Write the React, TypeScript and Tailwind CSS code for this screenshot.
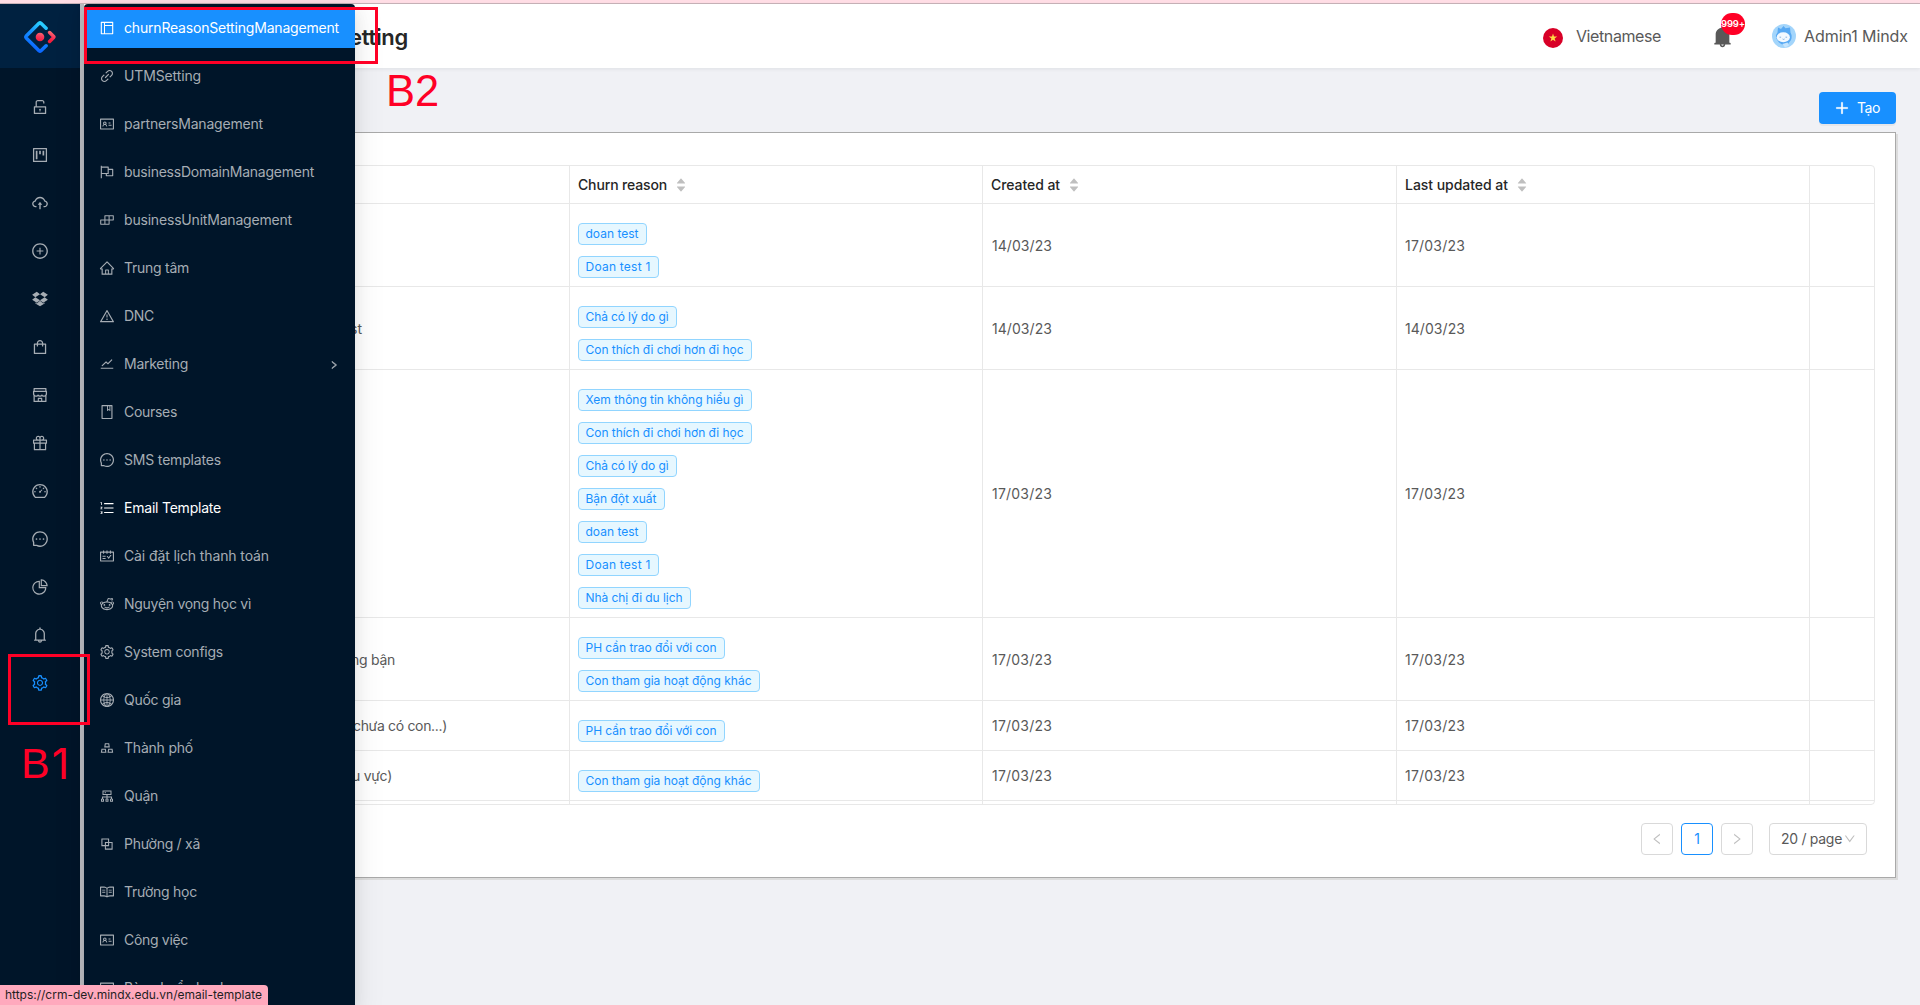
import React from "react";
import {
  AiOutlineUnlock, AiOutlineProject, AiOutlineCloudUpload, AiOutlinePlusCircle, AiOutlineDropbox,
  AiOutlineShopping, AiOutlineShop, AiOutlineGift, AiOutlineDashboard, AiOutlineMessage,
  AiOutlinePieChart, AiOutlineBell, AiOutlineSetting, AiOutlineLayout, AiOutlineLink, AiOutlineIdcard,
  AiOutlineFlag, AiOutlineBuild, AiOutlineHome, AiOutlineWarning, AiOutlineStock, AiOutlineBook,
  AiOutlineOrderedList, AiOutlineSchedule, AiOutlineReddit, AiOutlineGlobal, AiOutlineGold,
  AiOutlineCluster, AiOutlineBlock, AiOutlineRead, AiFillBell, AiOutlinePlus, AiOutlineLeft,
  AiOutlineRight, AiOutlineDown, AiFillCaretUp, AiFillCaretDown,
} from "react-icons/ai";

const railIcons = [
  AiOutlineUnlock, AiOutlineProject, AiOutlineCloudUpload, AiOutlinePlusCircle, AiOutlineDropbox,
  AiOutlineShopping, AiOutlineShop, AiOutlineGift, AiOutlineDashboard, AiOutlineMessage,
  AiOutlinePieChart, AiOutlineBell, AiOutlineSetting,
];

const menu = [
  { icon: AiOutlineLayout, label: "churnReasonSettingManagement", w: 215, state: "active" },
  { icon: AiOutlineLink, label: "UTMSetting", w: 77 },
  { icon: AiOutlineIdcard, label: "partnersManagement", w: 139 },
  { icon: AiOutlineFlag, label: "businessDomainManagement", w: 190 },
  { icon: AiOutlineBuild, label: "businessUnitManagement", w: 168 },
  { icon: AiOutlineHome, label: "Trung tâm", w: 65 },
  { icon: AiOutlineWarning, label: "DNC", w: 30 },
  { icon: AiOutlineStock, label: "Marketing", w: 64, sub: true },
  { icon: AiOutlineBook, label: "Courses", w: 53 },
  { icon: AiOutlineMessage, label: "SMS templates", w: 97 },
  { icon: AiOutlineOrderedList, label: "Email Template", w: 97, state: "hover" },
  { icon: AiOutlineSchedule, label: "Cài đặt lịch thanh toán", w: 145 },
  { icon: AiOutlineReddit, label: "Nguyện vọng học vì", w: 127 },
  { icon: AiOutlineSetting, label: "System configs", w: 99 },
  { icon: AiOutlineGlobal, label: "Quốc gia", w: 57 },
  { icon: AiOutlineGold, label: "Thành phố", w: 69 },
  { icon: AiOutlineCluster, label: "Quận", w: 34 },
  { icon: AiOutlineBlock, label: "Phường / xã", w: 76 },
  { icon: AiOutlineRead, label: "Trường học", w: 73 },
  { icon: AiOutlineIdcard, label: "Công việc", w: 64 },
  { icon: AiOutlineIdcard, label: "Bàn chuẩn hạnh", w: 104 },
];

const rows = [
  { name: "", w: 0, end: 0, tags: ["doan test", "Doan test 1"], created: "14/03/23", updated: "17/03/23" },
  { name: "st", w: 12, end: 361, tags: ["Chả có lý do gì", "Con thích đi chơi hơn đi học"], created: "14/03/23", updated: "14/03/23" },
  {
    name: "", w: 0, end: 0,
    tags: ["Xem thông tin không hiểu gì", "Con thích đi chơi hơn đi học", "Chả có lý do gì", "Bận đột xuất", "doan test", "Doan test 1", "Nhà chị đi du lịch"],
    created: "17/03/23", updated: "17/03/23",
  },
  { name: "ng bận", w: 44, end: 394, tags: ["PH cần trao đổi với con", "Con tham gia hoạt động khác"], created: "17/03/23", updated: "17/03/23" },
  { name: "chưa có con...)", w: 94, end: 446, tags: ["PH cần trao đổi với con"], created: "17/03/23", updated: "17/03/23" },
  { name: "u vực)", w: 40, end: 391, tags: ["Con tham gia hoạt động khác"], created: "17/03/23", updated: "17/03/23" },
];

const tagWidths: Record<string, number> = {
  "doan test": 69,
  "Doan test 1": 81,
  "Chả có lý do gì": 99,
  "Con thích đi chơi hơn đi học": 174,
  "Xem thông tin không hiểu gì": 174,
  "Bận đột xuất": 87,
  "Nhà chị đi du lịch": 113,
  "PH cần trao đổi với con": 147,
  "Con tham gia hoạt động khác": 182,
};

/** Text set to an exact advance width, keeping the glyph height. */
function Fit({ w, children }: { w: number; children: string }) {
  const ref = React.useRef<HTMLSpanElement>(null);
  const [ls, setLs] = React.useState(0);
  React.useLayoutEffect(() => {
    if (ref.current) setLs((w - ref.current.getBoundingClientRect().width) / children.length);
  }, [w, children]);
  return <span ref={ref} className="whitespace-nowrap" style={{ letterSpacing: ls + "px" }}>{children}</span>;
}

function Logo() {
  return (
    <svg className="size-8" viewBox="0 0 200 200">
      <defs>
        <linearGradient id="lg1" x1="0.6" y1="0" x2="0.3" y2="1">
          <stop offset="0" stopColor="#29cdff" /><stop offset="0.4" stopColor="#148eff" /><stop offset="1" stopColor="#0a60ff" />
        </linearGradient>
        <linearGradient id="lg2" x1="0.7" y1="0" x2="0.5" y2="1">
          <stop offset="0" stopColor="#fa6a6e" /><stop offset="0.45" stopColor="#f73a5c" /><stop offset="1" stopColor="#f51d3c" />
        </linearGradient>
      </defs>
      <path d="M138 45 L106 14 Q100 9 94 14 L14 94 Q9 100 14 106 L94 186 Q100 191 106 186 L138 155" fill="none" stroke="url(#lg1)" strokeWidth="22" strokeLinecap="round" strokeLinejoin="round" />
      <path d="M160 72 L185 97 Q188 100 185 103 L160 128" fill="none" stroke="url(#lg2)" strokeWidth="22" strokeLinecap="round" strokeLinejoin="round" />
      <circle cx="100" cy="100" r="27" fill="url(#lg2)" />
    </svg>
  );
}

function Avatar() {
  return (
    <svg className="size-6" viewBox="0 0 24 24">
      <circle cx="12" cy="12" r="12" fill="#a3d5fb" />
      <path d="M5.500 8.500 L6 3.500 L9 5 L11.500 2 L13.500 4.300 L18 3.500 L18.500 8.500 Q20.500 12 19 16 L16 20 Q11 22 7 18.500 Q3.500 15 4 11Z" fill="#58a9f3" />
      <ellipse cx="11.300" cy="13.200" rx="6.600" ry="5" fill="#f3f9ff" />
      <path d="M7.500 13.200h1.600M13.500 13.200h1.600M10.600 15q1 .8 2 0" stroke="#6a9fd8" strokeWidth=".8" fill="none" />
      <path d="M10.500 20 L15.500 18.500 L17 21.500 L13 23.500Z" fill="#c5e4fd" />
    </svg>
  );
}

function Head({ children, w }: { children: string; w: number }) {
  return (
    <div className="flex h-[37px] items-center px-2 pt-px text-sm font-medium text-[#262626]">
      <Fit w={w}>{children}</Fit>
      <span className="ml-[8px] flex flex-col text-[12px] leading-none text-[#bfbfbf]">
        <AiFillCaretUp className="block" />
        <AiFillCaretDown className="-mt-[4px] block" />
      </span>
    </div>
  );
}

const grid = "grid grid-cols-[30px_414px_413px_414px_413px_65px]";

export default function App() {
  return (
    <div className="relative flex h-[1005px] w-[1920px] flex-col overflow-hidden bg-[#f0f1f5] font-['Inter','Noto_Sans',sans-serif] text-[#595959]">
      <div className="h-1 shrink-0 border-b border-[#c9b3b9] bg-[#ffdde5]" />
      <div className="flex min-h-0 grow">
        <aside className="flex w-20 shrink-0 flex-col bg-[#001529]">
          <div className="flex h-16 items-center justify-center bg-[#002140] pt-0.5"><Logo /></div>
          <nav className="flex flex-col gap-2 pt-[19px]">
            {railIcons.map((Icon, i) => (
              <div key={i} className={"flex h-10 items-center justify-center text-[18px] " + (i === 12 ? "text-[#1890ff]" : "text-[#a6adb4]")}>
                <Icon />
              </div>
            ))}
          </nav>
        </aside>

        <main className="flex min-w-0 grow flex-col">
          <header className="z-10 flex h-16 shrink-0 items-center bg-white shadow-[0_1px_4px_rgba(0,21,41,.08)]">
            <h1 className="w-[328px] pt-0.5 text-right text-[22px] font-semibold tracking-[-0.3px] text-[#262626]">etting</h1>
            <div className="ml-auto flex items-center pr-[12px] text-base">
              <svg className="mt-[3px] size-5" viewBox="0 0 20 20">
                <circle cx="10" cy="10" r="10" fill="#d80027" />
                <path fill="#ffda44" d="M10 5.600l1 3h3.200l-2.600 1.900 1 3.100L10 11.700l-2.600 1.900 1-3.100-2.600-1.900H9z" />
              </svg>
              <span className="ml-[13px]"><Fit w={85}>Vietnamese</Fit></span>
              <span className="relative ml-[49px] mt-px flex text-[25px]">
                <AiFillBell />
                <span className="absolute -top-[11px] left-[11px] flex h-[22px] w-6 items-center justify-center rounded-full bg-[#ff0026] text-[9.500px] font-semibold text-white">
                  <Fit w={24}>999+</Fit>
                </span>
              </span>
              <span className="ml-[37px]"><Avatar /></span>
              <span className="ml-2"><Fit w={104}>Admin1 Mindx</Fit></span>
            </div>
          </header>

          <div className="flex grow flex-col pl-6 pr-6">
            <button className="mt-6 flex h-8 w-[77px] items-center self-end rounded bg-[#1890ff] pl-[15px] text-sm text-white shadow-[0_2px_0_rgba(0,0,0,.045)]">
              <AiOutlinePlus className="-mt-px text-[16px] [stroke-width:40] stroke-white" />
              <span className="ml-[7px]"><Fit w={23}>Tạo</Fit></span>
            </button>

            <section className="mt-2 h-[746px] border border-[#a9a9a9] bg-white pl-5 pr-5 pt-8 shadow-[2px_2px_0_#dcdcdc]">
              <div className="h-[640px] w-[1750px] overflow-hidden rounded-sm border border-[#e8e8e8] text-sm">
                <div className={grid + " divide-x divide-[#e8e8e8] border-b border-[#e8e8e8]"}>
                  <div /><div />
                  <Head w={89}>Churn reason</Head>
                  <Head w={69}>Created at</Head>
                  <Head w={103}>Last updated at</Head>
                  <div />
                </div>
                {rows.map((r, i) => (
                  <div key={i} className={grid + " divide-x divide-[#e8e8e8] border-b border-[#e8e8e8]"}>
                    <div />
                    <div className="flex items-center overflow-hidden pt-px">
                      {r.name && <span className="flex justify-end" style={{ width: r.end - 155 }}><Fit w={r.w}>{r.name}</Fit></span>}
                    </div>
                    <div className="flex flex-col items-start p-2">
                      {r.tags.map((t) => (
                        <span key={t} style={{ width: tagWidths[t] }} className="mt-[11px] flex h-[22px] items-center rounded border border-[#91d5ff] bg-[#e6f7ff] pl-[6.500px] text-xs text-[#1890ff]">
                          <Fit w={tagWidths[t] - 16}>{t}</Fit>
                        </span>
                      ))}
                    </div>
                    <div className="flex items-center pl-[9px] pt-px"><Fit w={60}>{r.created}</Fit></div>
                    <div className="flex items-center px-2 pt-px"><Fit w={60}>{r.updated}</Fit></div>
                    <div />
                  </div>
                ))}
                <div className={grid + " h-4 divide-x divide-[#e8e8e8]"}><div /><div /><div /><div /><div /><div /></div>
              </div>

              <div className="mt-[18px] flex justify-end pr-2 text-sm">
                <span className="flex size-8 items-center justify-center rounded border border-[#d9d9d9] text-[14px] text-[#bfbfbf]"><AiOutlineLeft /></span>
                <span className="ml-2 flex size-8 items-center justify-center rounded border border-[#1890ff] text-[#1890ff]">1</span>
                <span className="ml-2 flex size-8 items-center justify-center rounded border border-[#d9d9d9] text-[14px] text-[#bfbfbf]"><AiOutlineRight /></span>
                <span className="ml-4 flex h-8 w-[98px] items-center rounded border border-[#d9d9d9] pl-[11px]">
                  <Fit w={61}>20 / page</Fit><AiOutlineDown className="ml-px text-[13.500px] text-[#bfbfbf]" />
                </span>
              </div>
            </section>
          </div>
        </main>
      </div>

      <div className="absolute left-20 top-1 z-10 h-[1001px] w-1 bg-[#bcbdc3]" />
      <div className="absolute left-[84px] top-1 z-20 h-[1001px] w-[271px] overflow-hidden rounded-t bg-[#001529] pt-1 shadow-[0_3px_6px_-4px_rgba(0,0,0,.12),0_6px_16px_rgba(0,0,0,.08),0_9px_28px_8px_rgba(0,0,0,.05)]">
        <div className="flex flex-col gap-2 text-sm">
          {menu.map(({ icon: Icon, label, w, state, sub }, i) => (
            <div key={i} className={"flex h-10 items-center pl-[15px] pr-4 " + (state === "active" ? "bg-[#1890ff] text-white" : state === "hover" ? "text-white" : "text-[#a6adb4]")}>
              <Icon className="mr-[9px] shrink-0 text-[16px]" />
              <Fit w={w}>{label}</Fit>
              {sub && <AiOutlineRight className="ml-auto mt-0.5 text-[10px] [stroke-width:60] stroke-current" />}
            </div>
          ))}
        </div>
      </div>

      <div className="absolute left-[84px] top-[7px] z-30 h-[57px] w-[294px] border-[3px] border-[#ff0026]" />
      <div className="absolute left-2 top-[654px] z-30 h-[71px] w-[82px] border-[3px] border-[#ff0026]" />
      <div className="absolute left-[386px] top-[67px] z-30 font-['Liberation_Sans',sans-serif] text-[43.500px] leading-[48px] text-[#ff0026]"><Fit w={53}>B2</Fit></div>
      <div className="absolute left-[21px] top-[739px] z-30 flex text-[43px] leading-[48px] text-[#ff0026]">
        <span className="font-['Liberation_Sans',sans-serif]">B</span>
        <span className="ml-[2px] font-['Inter',sans-serif]">1</span>
      </div>
      <div className="absolute bottom-0 left-0 z-40 flex h-5 w-[268px] items-center rounded-tr bg-[#ffa9bd] pl-[5px] text-xs text-[#1f1f1f]">
        <Fit w={257}>https://crm-dev.mindx.edu.vn/email-template</Fit>
      </div>
    </div>
  );
}
